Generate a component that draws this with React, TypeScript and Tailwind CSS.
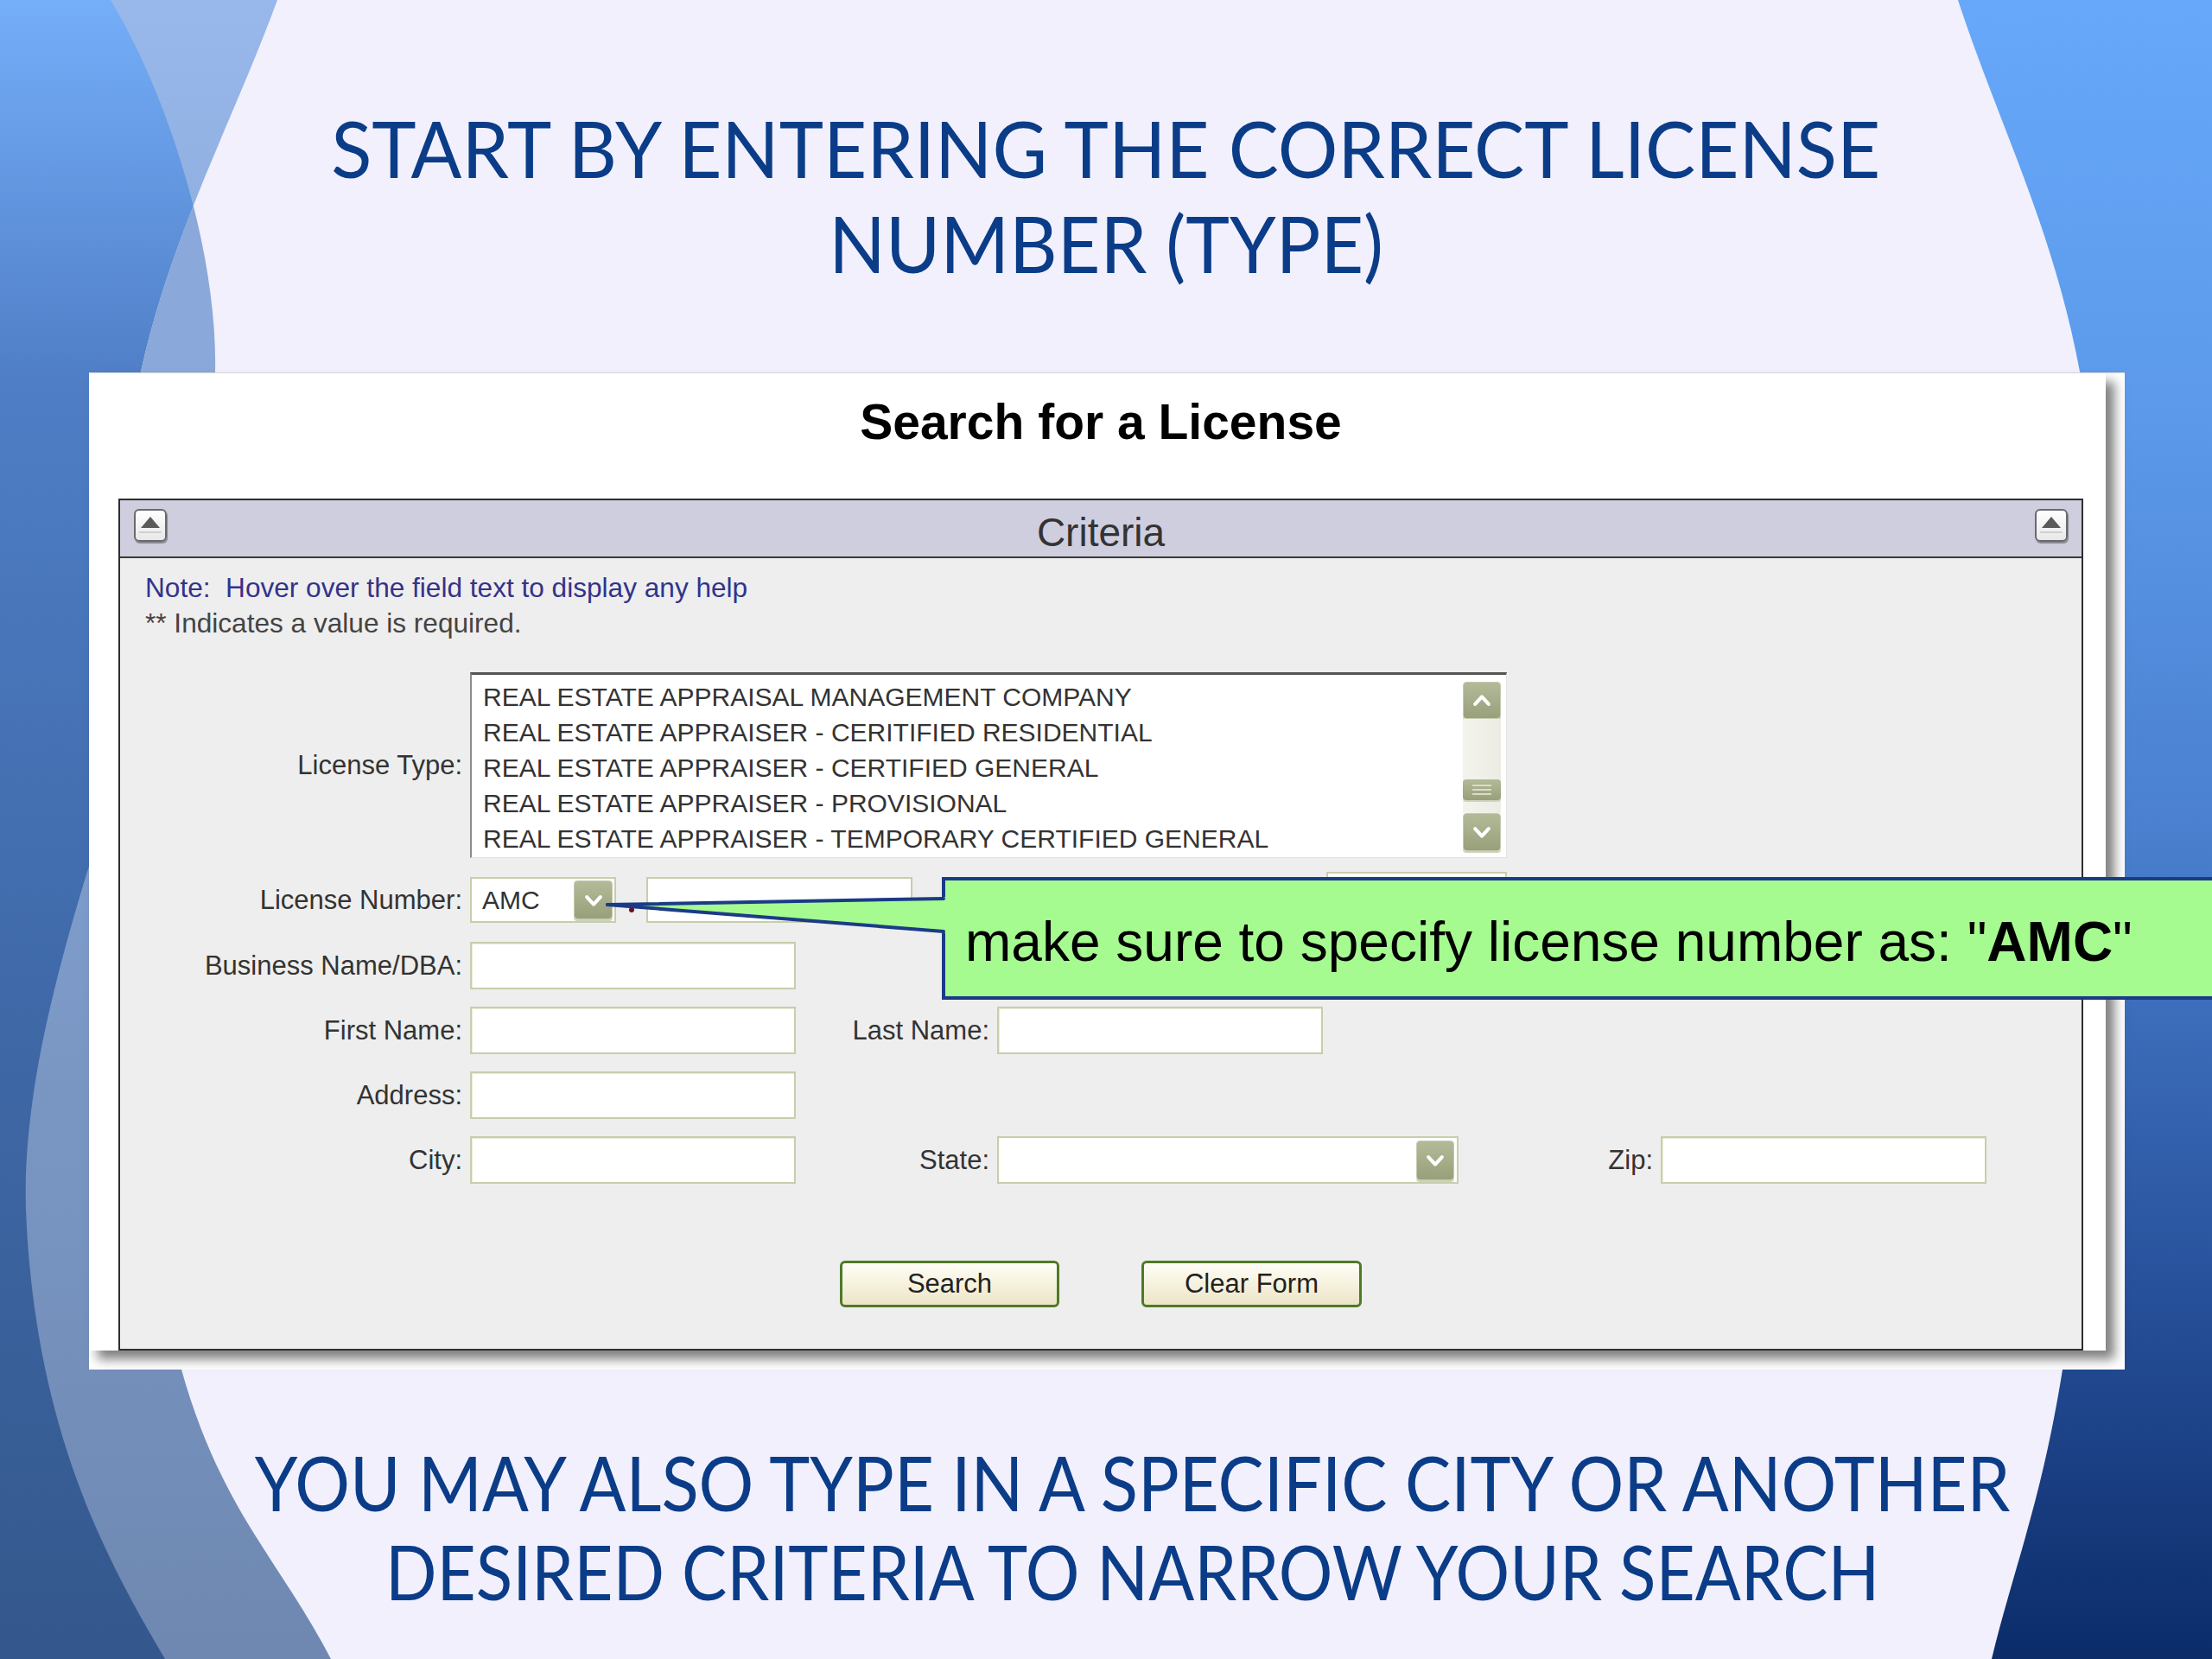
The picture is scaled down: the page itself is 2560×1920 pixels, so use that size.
import React from "react";

const lensLeftCurve =
  "C268.3 143.3 197.8 271.7 163 430 C128.2 588.3 107 757.5 115 950 C122.8 1142.5 164.8 1423.3 210 1585 C255.2 1746.7 325.3 1808.3 383 1920";
const leftOut = `M0 0 L321 0 ${lensLeftCurve} L0 1920 Z`;
const leftIn = `M321 0 ${lensLeftCurve} L2560 1920 L2560 0 Z`;
const darkPath =
  "M0 0 L128 0 C200 120 252 300 249 430 C245 700 20 1100 30 1400 C40 1650 120 1800 191 1920 L0 1920 Z";
const rightOut =
  "M2266 0 C2313 143.3 2376 263.3 2407 430 C2438 596.7 2455.3 807.5 2452 1000 C2448.7 1192.5 2411.5 1431.7 2387 1585 C2362.5 1738.3 2332.3 1808.3 2305 1920 L2560 1920 L2560 0 Z";

function Background() {
  return (
    <svg
      className="absolute left-0 top-0"
      width="2560"
      height="1920"
      viewBox="0 0 2560 1920"
    >
      <defs>
        <linearGradient id="lb" gradientUnits="userSpaceOnUse" x1="0" y1="0" x2="0" y2="1920">
          <stop offset="0" stopColor="#98b7ea" />
          <stop offset="0.5" stopColor="#7f9dcc" />
          <stop offset="1" stopColor="#6e88b1" />
        </linearGradient>
        <linearGradient id="ld" gradientUnits="userSpaceOnUse" x1="0" y1="0" x2="0" y2="1920">
          <stop offset="0" stopColor="#75aef9" />
          <stop offset="0.23" stopColor="#4f7ec6" />
          <stop offset="0.6" stopColor="#3f69a8" />
          <stop offset="1" stopColor="#34588d" />
        </linearGradient>
        <linearGradient id="rb" gradientUnits="userSpaceOnUse" x1="0" y1="0" x2="0" y2="1920">
          <stop offset="0" stopColor="#67a8fa" />
          <stop offset="0.25" stopColor="#5c99ea" />
          <stop offset="0.5" stopColor="#4a80cf" />
          <stop offset="0.78" stopColor="#27509a" />
          <stop offset="1" stopColor="#0b2c69" />
        </linearGradient>
        <clipPath id="leftOutClip">
          <path d={leftOut} />
        </clipPath>
        <clipPath id="leftInClip">
          <path d={leftIn} />
        </clipPath>
      </defs>
      <path d={leftOut} fill="url(#lb)" />
      <path d={darkPath} fill="url(#ld)" clipPath="url(#leftOutClip)" />
      <path d={darkPath} fill="#8aa8d9" clipPath="url(#leftInClip)" />
      <path d={rightOut} fill="url(#rb)" />
    </svg>
  );
}

function Chevron({ dir, size }: { dir: "up" | "down"; size: number }) {
  return (
    <svg width={size} height={size} viewBox="0 0 20 20">
      <path
        d={dir === "down" ? "M4 7 L10 13.5 L16 7" : "M4 13 L10 6.5 L16 13"}
        fill="none"
        stroke="white"
        strokeWidth="3.2"
        strokeLinecap="round"
        strokeLinejoin="round"
      />
    </svg>
  );
}

function SageButton({ dir, className }: { dir: "up" | "down"; className: string }) {
  return (
    <div
      className={`flex items-center justify-center rounded-[4px] border border-[#c4cab0] bg-gradient-to-b from-[#b3ba98] to-[#98a07a] shadow-[0_2px_0_#cdd2bd] ${className}`}
    >
      <Chevron dir={dir} size={26} />
    </div>
  );
}

function CollapseButton() {
  return (
    <div className="flex h-[38px] w-[38px] flex-col items-center rounded-[6px] border-2 border-[#6a6a6a] bg-gradient-to-b from-white to-[#e8e8e8] pt-[7px] shadow-[1px_2px_1px_rgba(0,0,0,0.35)]">
      <svg width="22" height="13" viewBox="0 0 22 13">
        <path d="M11 0 L22 13 L0 13 Z" fill="#5a5a5a" />
      </svg>
      <div className="mt-[4px] h-[2px] w-[26px] bg-[#d0d0d0]" />
    </div>
  );
}

function Label({ children, w = "w-[376px]" }: { children: React.ReactNode; w?: string }) {
  return (
    <div className={`${w} shrink-0 pr-[9px] text-right text-[31px] leading-[36px] text-[#333333]`}>
      {children}
    </div>
  );
}

const inputCls =
  "h-[55px] shrink-0 border-2 border-[#c7ceab] bg-white shadow-[inset_1px_1px_0_#e9ecdd]";

const licenseTypes = [
  "REAL ESTATE APPRAISAL MANAGEMENT COMPANY",
  "REAL ESTATE APPRAISER - CERITIFIED RESIDENTIAL",
  "REAL ESTATE APPRAISER - CERTIFIED GENERAL",
  "REAL ESTATE APPRAISER - PROVISIONAL",
  "REAL ESTATE APPRAISER - TEMPORARY CERTIFIED GENERAL",
];

function Listbox() {
  return (
    <div className="flex h-[215px] w-[1200px] shrink-0 border-b border-l-2 border-r border-t-[3px] border-b-[#e2e2e2] border-l-[#8c8c8c] border-r-[#e2e2e2] border-t-[#555555] bg-white">
      <div className="flex-1 pl-[13px] pt-[5px] text-[30px] leading-[41px] text-[#333333]">
        {licenseTypes.map((t) => (
          <div key={t} className="whitespace-nowrap">
            {t}
          </div>
        ))}
      </div>
      <div className="mb-[7px] mr-[6px] mt-[8px] flex w-[44px] flex-col">
        <SageButton dir="up" className="h-[43px] w-[44px]" />
        <div className="flex flex-1 flex-col justify-end bg-gradient-to-r from-[#f4f4ee] to-[#ecece4] pb-[15px]">
          <div className="flex h-[24px] flex-col items-center justify-center gap-[3px] rounded-[4px] bg-gradient-to-b from-[#b3ba98] to-[#98a07a] shadow-[0_2px_0_#cdd2bd]">
            <div className="h-[2px] w-[22px] bg-[#d9dcc9]" />
            <div className="h-[2px] w-[22px] bg-[#d9dcc9]" />
            <div className="h-[2px] w-[22px] bg-[#d9dcc9]" />
          </div>
        </div>
        <SageButton dir="down" className="h-[44px] w-[44px]" />
      </div>
    </div>
  );
}

function Window() {
  return (
    <div className="flex h-[1131px] w-[2334px] flex-col bg-white pl-[34px] pr-[26px] shadow-[10px_10px_12px_rgba(0,0,0,0.5)]">
      <div className="h-[145px] pt-[22px] text-center text-[57px] font-bold leading-[68px] text-black">
        Search for a License
      </div>
      <div className="flex flex-1 flex-col border-2 border-[#2e2e2e] bg-[#eeeeee]">
        <div className="flex h-[67px] items-start justify-between border-b-2 border-[#3a3a3a] bg-[#cecedf] px-[16px] pt-[10px]">
          <CollapseButton />
          <div className="mt-[1px] text-[46px] leading-[52px] text-[#333333]">Criteria</div>
          <CollapseButton />
        </div>
        <div className="flex flex-col pt-[14px]">
          <div className="pl-[29px] text-[31.6px] leading-[41px] text-[#33338a]">
            Note:&nbsp; Hover over the field text to display any help
          </div>
          <div className="pl-[29px] text-[31.6px] leading-[41px] text-[#444444]">
            ** Indicates a value is required.
          </div>

          <div className="mt-[36px] flex items-center pl-[29px]">
            <Label>License Type:</Label>
            <Listbox />
          </div>

          <div className="mt-[22px] flex items-center pl-[29px]">
            <Label>License Number:</Label>
            <div className="flex h-[53px] w-[169px] shrink-0 items-center justify-between border-2 border-[#c7ceab] bg-white pl-[12px] pr-[2px]">
              <span className="text-[30px] text-[#333333]">AMC</span>
              <SageButton dir="down" className="h-[45px] w-[45px]" />
            </div>
            <div className="flex w-[35px] shrink-0 justify-center pt-[22px]">
              <div className="h-[6px] w-[6px] rounded-full bg-[#6a1020]" />
            </div>
            <div className="h-[53px] w-[308px] shrink-0 border-2 border-[#c7ceab] bg-white" />
            <div className="-mt-[12px] ml-[479px] h-[53px] w-[209px] shrink-0 border-2 border-[#c7ceab] bg-white" />
          </div>

          <div className="mt-[22px] flex items-center pl-[29px]">
            <Label>Business Name/DBA:</Label>
            <div className={`${inputCls} w-[377px]`} />
          </div>

          <div className="mt-[20px] flex items-center pl-[29px]">
            <Label>First Name:</Label>
            <div className={`${inputCls} w-[377px]`} />
            <Label w="w-[233px]">Last Name:</Label>
            <div className={`${inputCls} w-[377px]`} />
          </div>

          <div className="mt-[20px] flex items-center pl-[29px]">
            <Label>Address:</Label>
            <div className={`${inputCls} w-[377px]`} />
          </div>

          <div className="mt-[20px] flex items-center pl-[29px]">
            <Label>City:</Label>
            <div className={`${inputCls} w-[377px]`} />
            <Label w="w-[233px]">State:</Label>
            <div className="flex h-[55px] w-[534px] shrink-0 items-center justify-end border-2 border-[#c7ceab] bg-white pr-[3px]">
              <SageButton dir="down" className="h-[46px] w-[44px]" />
            </div>
            <Label w="w-[234px]">Zip:</Label>
            <div className={`${inputCls} w-[377px]`} />
          </div>

          <div className="mt-[89px] flex justify-center gap-[95px]">
            <div className="flex h-[54px] w-[254px] items-center justify-center rounded-[6px] border-[3px] border-[#4e7a28] bg-gradient-to-b from-[#fffef6] to-[#ece5c6] text-[31px] text-[#222222]">
              Search
            </div>
            <div className="flex h-[54px] w-[255px] items-center justify-center rounded-[6px] border-[3px] border-[#4e7a28] bg-gradient-to-b from-[#fffef6] to-[#ece5c6] text-[31px] text-[#222222]">
              Clear Form
            </div>
          </div>
        </div>
      </div>
    </div>
  );
}

function Callout() {
  return (
    <>
      <div className="absolute left-[1090px] top-[1015px] flex h-[142px] w-[1520px] items-center border-4 border-[#1b3b87] bg-[#a5fb8f] pl-[23px] pt-[8px] text-[64px] text-black">
        <span>
          make sure to specify license number as: "<b>AMC</b>"
        </span>
      </div>
      <svg className="absolute left-[700px] top-[1030px]" width="400" height="60" viewBox="0 0 400 60">
        <polygon points="3,17 397,8 397,50" fill="#a5fb8f" />
        <line x1="3" y1="17" x2="392" y2="10" stroke="#1b3b87" strokeWidth="4" strokeLinecap="round" />
        <line x1="3" y1="17" x2="392" y2="48" stroke="#1b3b87" strokeWidth="4" strokeLinecap="round" />
      </svg>
    </>
  );
}

export default function App() {
  return (
    <div className="relative h-[1920px] w-[2560px] overflow-hidden bg-[#f1f0fc] font-['Liberation_Sans',Arial,sans-serif]">
      <Background />
      <div className="relative flex flex-col">
        <h1 className="mt-[116px] text-center font-['Lato',sans-serif] text-[92px] font-normal leading-[110px] text-[#0b3c88]">
          <span className="inline-block origin-center scale-x-[0.945]">
            START BY ENTERING THE CORRECT LICENSE
          </span>
          <br />
          <span className="inline-block origin-center scale-x-[0.935]">NUMBER (TYPE)</span>
        </h1>
        <div className="ml-[103px] mt-[95px] h-[1154px] w-[2356px] border-t border-[#dcdcdc] bg-white">
          <Window />
        </div>
        <p className="mt-[79px] pl-[62px] text-center font-['Lato',sans-serif] text-[88px] leading-[103px] text-[#0b3c88]">
          <span className="inline-block origin-center scale-x-[0.905]">
            YOU MAY ALSO TYPE IN A SPECIFIC CITY OR ANOTHER
          </span>
          <br />
          <span className="inline-block origin-center scale-x-[0.89]">
            DESIRED CRITERIA TO NARROW YOUR SEARCH
          </span>
        </p>
      </div>
      <Callout />
    </div>
  );
}
